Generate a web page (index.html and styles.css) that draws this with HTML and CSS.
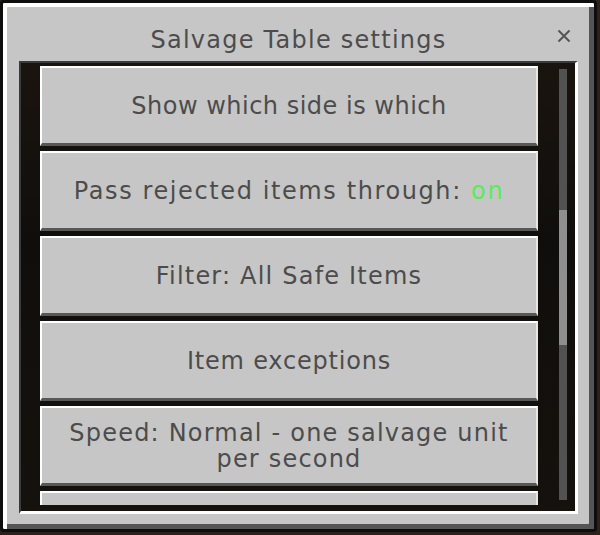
FILE: index.html
```html
<!DOCTYPE html>
<html lang="en">
<head>
<meta charset="utf-8">
<title>Salvage Table settings</title>
<link rel="stylesheet" href="styles.css">
</head>
<body>
<div class="dialog">
  <header class="dialog-header">
    <span class="spacer"></span>
    <h1 class="dialog-title">Salvage Table settings</h1>
    <button class="close" aria-label="Close">
      <svg width="14" height="14" viewBox="0 0 14 14">
        <path d="M1.5 1.5L12.5 12.5M12.5 1.5L1.5 12.5" stroke="#555555" stroke-width="2" fill="none"/>
      </svg>
    </button>
  </header>
  <div class="panel">
    <div class="list">
      <button class="mc-btn label-tight">Show which side is which</button>
      <button class="mc-btn label-wide">Pass rejected items through: <span class="state-on">on</span></button>
      <button class="mc-btn">Filter: All Safe Items</button>
      <button class="mc-btn label-mid">Item exceptions</button>
      <button class="mc-btn">Speed: Normal - one salvage unit per second</button>
      <button class="mc-btn"></button>
    </div>
    <div class="scrollbar"><div class="thumb"></div></div>
  </div>
</div>
</body>
</html>
```
FILE: styles.css
```css
html, body {
  margin: 0;
  padding: 0;
}

body {
  width: 600px;
  height: 535px;
  background: #2e2117;
  overflow: hidden;
  font-family: "DejaVu Sans", "Liberation Sans", sans-serif;
}

.dialog {
  box-sizing: border-box;
  width: 597px;
  height: 532px;
  border: 3px solid #0d0d0d;
  border-radius: 4px;
  background: #c6c6c6;
  box-shadow: inset 4px 4px 0 #ffffff, inset -5px -5px 0 #555555;
  display: flex;
  flex-direction: column;
}

.dialog-header {
  height: 58px;
  display: grid;
  grid-template-columns: 1fr auto 1fr;
  align-items: start;
}

.dialog-title {
  margin: 24px 0 0 0;
  font-size: 24px;
  line-height: 26px;
  font-weight: normal;
  color: #4c4c4c;
  letter-spacing: 1.25px;
  white-space: nowrap;
}

.close {
  justify-self: end;
  margin: 26px 23px 0 0;
  padding: 0;
  border: 0;
  background: none;
  width: 14px;
  height: 14px;
  display: block;
}

.close svg {
  display: block;
}

.panel {
  box-sizing: border-box;
  width: 559px;
  height: 453px;
  margin-left: 16px;
  border-top: 2px solid #3a3a3a;
  border-left: 2px solid #3a3a3a;
  border-right: 3px solid #ffffff;
  border-bottom: 3px solid #ffffff;
  background: linear-gradient(180deg, #1a140f 0%, #100e0c 40%, #15110d 100%);
  display: flex;
}

.list {
  flex: 1;
  margin: 3px 0 6px 19px;
  overflow: hidden;
  display: flex;
  flex-direction: column;
  gap: 5px;
}

.mc-btn {
  flex-shrink: 0;
  box-sizing: border-box;
  height: 80px;
  width: 100%;
  margin: 0;
  padding: 0 20px;
  background: #c6c6c6;
  border-top: 2px solid #ffffff;
  border-left: 2px solid #ffffff;
  border-right: 2px solid #e6e6e6;
  border-bottom: 3px solid #575757;
  font-family: "DejaVu Sans", "Liberation Sans", sans-serif;
  font-size: 24px;
  line-height: 26px;
  color: #4c4c4c;
  letter-spacing: 1.2px;
  text-align: center;
  display: flex;
  align-items: center;
  justify-content: center;
  appearance: none;
}

.label-tight {
  letter-spacing: 0.5px;
}

.label-mid {
  letter-spacing: 0.8px;
}

.label-wide {
  letter-spacing: 1.6px;
  white-space: pre;
}

.state-on {
  color: #5aeb5a;
}

.scrollbar {
  width: 8px;
  margin: 6px 8px 11px 21px;
  background: #525252;
}

.thumb {
  height: 135px;
  margin-top: 141px;
  background: #8f8f8f;
}
```
